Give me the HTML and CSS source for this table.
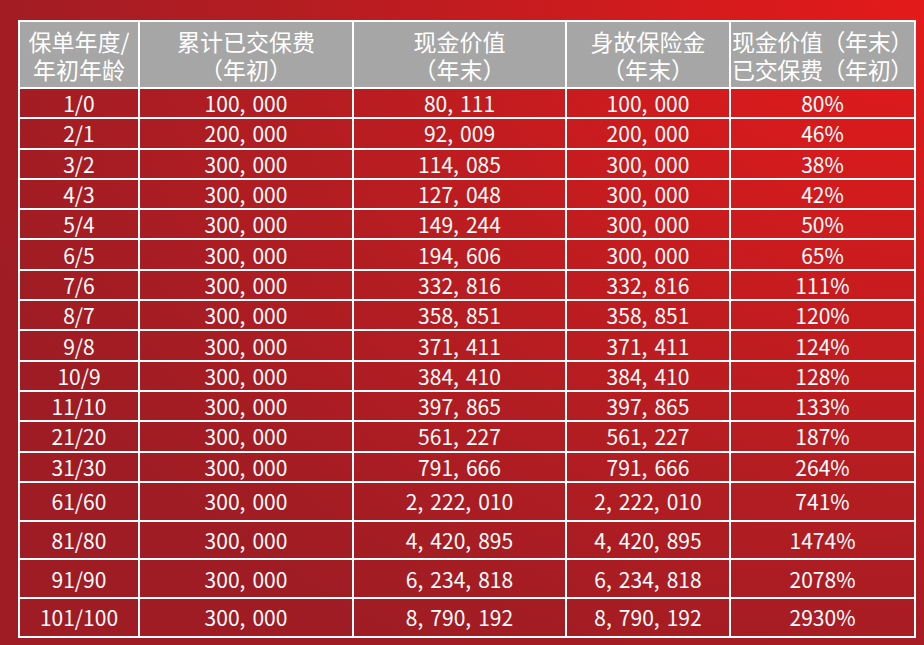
FILE: index.html
```html
<!DOCTYPE html>
<html lang="zh-CN">
<head>
<meta charset="utf-8">
<title>现金价值表</title>
<link rel="stylesheet" href="styles.css">
</head>
<body>
<div class="page">
  <table class="tbl">
    <colgroup>
      <col class="c1"><col class="c2"><col class="c3"><col class="c4"><col class="c5">
    </colgroup>
    <thead>
      <tr>
        <th><div class="hl">保单年度/</div><div class="hl">年初年龄</div></th>
        <th><div class="hl">累计已交保费</div><div class="hl">（年初）</div></th>
        <th><div class="hl">现金价值</div><div class="hl">（年末）</div></th>
        <th><div class="hl">身故保险金</div><div class="hl">（年末）</div></th>
        <th class="wide"><div class="hl">现金价值（年末）</div><div class="hl">已交保费（年初）</div></th>
      </tr>
    </thead>
    <tbody>
      <tr><td>1/0</td><td>100<span class="cm">,</span>000</td><td>80<span class="cm">,</span>111</td><td>100<span class="cm">,</span>000</td><td>80%</td></tr>
      <tr><td>2/1</td><td>200<span class="cm">,</span>000</td><td>92<span class="cm">,</span>009</td><td>200<span class="cm">,</span>000</td><td>46%</td></tr>
      <tr><td>3/2</td><td>300<span class="cm">,</span>000</td><td>114<span class="cm">,</span>085</td><td>300<span class="cm">,</span>000</td><td>38%</td></tr>
      <tr><td>4/3</td><td>300<span class="cm">,</span>000</td><td>127<span class="cm">,</span>048</td><td>300<span class="cm">,</span>000</td><td>42%</td></tr>
      <tr><td>5/4</td><td>300<span class="cm">,</span>000</td><td>149<span class="cm">,</span>244</td><td>300<span class="cm">,</span>000</td><td>50%</td></tr>
      <tr><td>6/5</td><td>300<span class="cm">,</span>000</td><td>194<span class="cm">,</span>606</td><td>300<span class="cm">,</span>000</td><td>65%</td></tr>
      <tr><td>7/6</td><td>300<span class="cm">,</span>000</td><td>332<span class="cm">,</span>816</td><td>332<span class="cm">,</span>816</td><td>111%</td></tr>
      <tr><td>8/7</td><td>300<span class="cm">,</span>000</td><td>358<span class="cm">,</span>851</td><td>358<span class="cm">,</span>851</td><td>120%</td></tr>
      <tr><td>9/8</td><td>300<span class="cm">,</span>000</td><td>371<span class="cm">,</span>411</td><td>371<span class="cm">,</span>411</td><td>124%</td></tr>
      <tr><td>10/9</td><td>300<span class="cm">,</span>000</td><td>384<span class="cm">,</span>410</td><td>384<span class="cm">,</span>410</td><td>128%</td></tr>
      <tr><td>11/10</td><td>300<span class="cm">,</span>000</td><td>397<span class="cm">,</span>865</td><td>397<span class="cm">,</span>865</td><td>133%</td></tr>
      <tr><td>21/20</td><td>300<span class="cm">,</span>000</td><td>561<span class="cm">,</span>227</td><td>561<span class="cm">,</span>227</td><td>187%</td></tr>
      <tr><td>31/30</td><td>300<span class="cm">,</span>000</td><td>791<span class="cm">,</span>666</td><td>791<span class="cm">,</span>666</td><td>264%</td></tr>
      <tr class="tall"><td>61/60</td><td>300<span class="cm">,</span>000</td><td>2<span class="cm">,</span>222<span class="cm">,</span>010</td><td>2<span class="cm">,</span>222<span class="cm">,</span>010</td><td>741%</td></tr>
      <tr class="tall"><td>81/80</td><td>300<span class="cm">,</span>000</td><td>4<span class="cm">,</span>420<span class="cm">,</span>895</td><td>4<span class="cm">,</span>420<span class="cm">,</span>895</td><td>1474%</td></tr>
      <tr class="tall"><td>91/90</td><td>300<span class="cm">,</span>000</td><td>6<span class="cm">,</span>234<span class="cm">,</span>818</td><td>6<span class="cm">,</span>234<span class="cm">,</span>818</td><td>2078%</td></tr>
      <tr class="tall"><td>101/100</td><td>300<span class="cm">,</span>000</td><td>8<span class="cm">,</span>790<span class="cm">,</span>192</td><td>8<span class="cm">,</span>790<span class="cm">,</span>192</td><td>2930%</td></tr>
    </tbody>
  </table>
</div>
</body>
</html>
```
FILE: styles.css
```css
html, body {
  margin: 0;
  padding: 0;
  height: 645px;
  overflow: hidden;
}
body {
  background: radial-gradient(ellipse 1000px 760px at 100% 0%, #e41a1a 0%, #cf1b1e 30%, #b31d22 65%, #9f1c24 100%);
  font-family: "Noto Sans CJK SC", "Noto Sans", sans-serif;
  color: #ffffff;
}
.page {
  padding: 20px 0 0 18px;
}
.tbl {
  border-collapse: collapse;
  table-layout: fixed;
  width: 898px;
  border: 2px solid #ffffff;
}
.c1 { width: 120px; }
.c2 { width: 214px; }
.c3 { width: 213px; }
.c4 { width: 164px; }
.c5 { width: 185px; }
.tbl th, .tbl td {
  border: 2px solid #ffffff;
  padding: 0;
  text-align: center;
  vertical-align: middle;
}
.tbl th {
  background: #a6a6a6;
  font-weight: normal;
  font-size: 23px;
  height: 65px;
  color: #ffffff;
}
.hl {
  height: 28px;
  line-height: 28px;
  white-space: nowrap;
}
.wide .hl {
  letter-spacing: -0.4px;
}
.tbl td {
  font-size: 21px;
  line-height: 24px;
  height: 28.3px;
  white-space: nowrap;
}
.tbl tr.tall td {
  height: 36.75px;
}
.cm {
  margin-right: 7px;
}
```
